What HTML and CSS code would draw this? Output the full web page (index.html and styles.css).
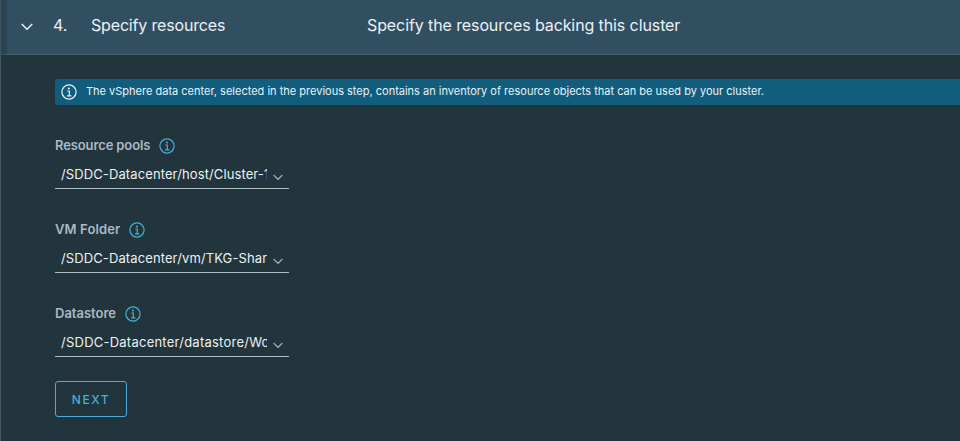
FILE: index.html
```html
<!DOCTYPE html>
<html lang="en">
<head>
<meta charset="utf-8">
<title>Specify resources</title>
<link rel="stylesheet" href="styles.css">
</head>
<body>
<svg class="symbols" width="0" height="0">
  <symbol id="info" viewBox="0 0 16 16">
    <circle cx="8" cy="8" r="7.1" fill="none" stroke="currentColor" stroke-width="1.2"/>
    <circle cx="7.9" cy="4.5" r="1.05" fill="currentColor"/>
    <path d="M6.2 7H8.3V11.7M6 11.8H10.4" fill="none" stroke="currentColor" stroke-width="1.2"/>
  </symbol>
  <symbol id="chevron" viewBox="0 0 12 8">
    <path d="M1.2 1.4L6 6.3L10.8 1.4" fill="none" stroke="currentColor" stroke-width="1.5" stroke-linecap="round" stroke-linejoin="round"/>
  </symbol>
</svg>
<section class="step">
  <header class="step-header">
    <svg class="toggle"><use href="#chevron"/></svg>
    <span class="number">4.</span>
    <span class="title">Specify resources</span>
    <span class="description">Specify the resources backing this cluster</span>
  </header>
  <div class="step-body">
    <div class="alert">
      <svg class="alert-icon"><use href="#info"/></svg>
      <span class="alert-text">The vSphere data center, selected in the previous step, contains an inventory of resource objects that can be used by your cluster.</span>
    </div>
    <div class="field">
      <div class="label-row"><span class="label label-pools">Resource pools</span><svg class="info"><use href="#info"/></svg></div>
      <div class="select"><span class="value value-pools">/SDDC-Datacenter/host/Cluster-1</span><svg class="caret"><use href="#chevron"/></svg></div>
    </div>
    <div class="field">
      <div class="label-row"><span class="label label-folder">VM Folder</span><svg class="info"><use href="#info"/></svg></div>
      <div class="select"><span class="value value-folder">/SDDC-Datacenter/vm/TKG-Shar</span><svg class="caret"><use href="#chevron"/></svg></div>
    </div>
    <div class="field">
      <div class="label-row"><span class="label label-store">Datastore</span><svg class="info"><use href="#info"/></svg></div>
      <div class="select"><span class="value value-store">/SDDC-Datacenter/datastore/Wo</span><svg class="caret"><use href="#chevron"/></svg></div>
    </div>
    <button class="next">NEXT</button>
  </div>
</section>
</body>
</html>
```
FILE: styles.css
```css
* { box-sizing: border-box; }
body {
  margin: 0;
  background: #22343c;
  color: #e9f2f6;
  font-family: Inter, "Liberation Sans", sans-serif;
  overflow: hidden;
}
.symbols { display: none; }
svg { flex: none; display: block; }
.step { height: 441px; border-left: 1px solid #405662; }
.step-header {
  display: flex;
  align-items: center;
  height: 55px;
  padding: 0 0 5px 14px;
  background: #324f61;
  border-left: 6px solid #2b4452;
  border-bottom: 1px solid #4a616d;
  font-size: 16px;
  line-height: 20px;
  white-space: nowrap;
}
.toggle { width: 12px; height: 8px; margin: 5px 20px 0 0; }
.number { width: 38px; }
.title { width: 276px; letter-spacing: -0.17px; }
.description { letter-spacing: -0.1px; }
.step-body { padding: 24px 0 0 54px; }
.alert {
  display: flex;
  align-items: center;
  height: 26px;
  padding-left: 6px;
  background: #115d7d;
  border-radius: 3px 0 0 3px;
}
.alert-icon { width: 16px; height: 16px; margin-right: 9px; }
.alert-text { font-size: 11px; line-height: 16px; padding-bottom: 2px; white-space: nowrap; }
.field { width: 234px; height: 84px; padding-top: 30px; }
.label-row { display: flex; align-items: center; height: 20px; color: #a9bac4; }
.label { font-size: 13px; line-height: 20px; font-weight: 600; white-space: nowrap; }
.label-pools { width: 95px; letter-spacing: -0.12px; }
.label-folder { width: 65px; letter-spacing: 0.12px; }
.label-store { width: 61px; }
.info { width: 16px; height: 16px; margin: 2px 0 0 8.5px; color: #4aaed9; }
.select {
  display: flex;
  align-items: center;
  height: 26px;
  margin-top: 8px;
  padding: 0 5px 0 6px;
  border-bottom: 1px solid #adbbc4;
}
.value {
  width: 206px;
  margin-right: 6px;
  overflow: hidden;
  white-space: nowrap;
  font-size: 13px;
  line-height: 20px;
  padding-bottom: 4px;
}
.value-pools { letter-spacing: 0.11px; }
.value-folder { letter-spacing: 0.11px; }
.value-store { letter-spacing: 0.24px; }
.caret { width: 10px; height: 7px; margin-top: 3px; color: #a9bac4; }
.next {
  display: block;
  width: 72px;
  height: 36px;
  margin-top: 24px;
  padding: 1px 0 0;
  border: 1px solid #4aaed9;
  border-radius: 3px;
  background: transparent;
  color: #4aaed9;
  font: 500 12px/20px Inter, sans-serif;
  letter-spacing: 1.6px;
}
```
